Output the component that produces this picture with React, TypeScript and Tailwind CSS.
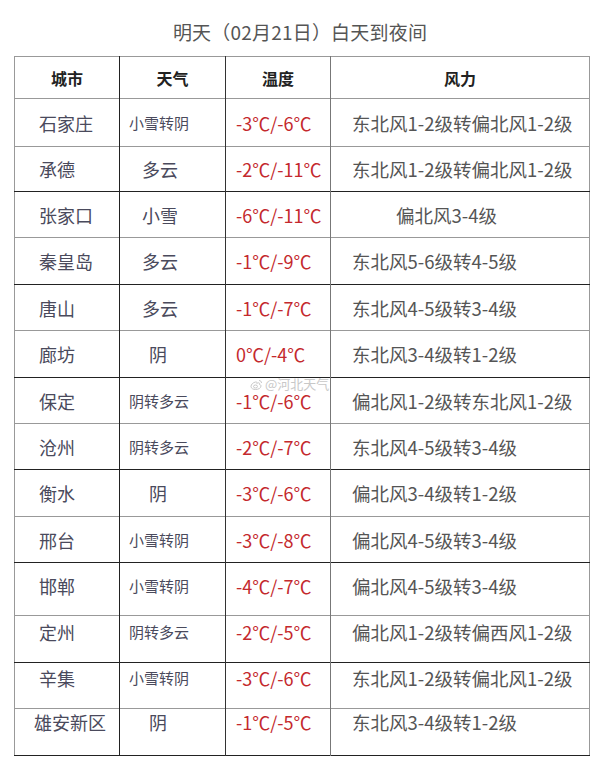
import React from 'react';

type Row = {
  city: string;
  weather: string;
  temp: string;
  wind: string;
  h: number;
  dark: boolean; // bottom line dark
  top?: number; // text top padding when not centered
  cityPad?: string;
  windPad?: string;
};

const rows: Row[] = [
  { city: '石家庄', weather: '小雪转阴', temp: '-3℃/-6℃', wind: '东北风1-2级转偏北风1-2级', h: 48, dark: false },
  { city: '承德', weather: '多云', temp: '-2℃/-11℃', wind: '东北风1-2级转偏北风1-2级', h: 45, dark: true },
  { city: '张家口', weather: '小雪', temp: '-6℃/-11℃', wind: '偏北风3-4级', h: 46, dark: false, windPad: 'pl-[65px]' },
  { city: '秦皇岛', weather: '多云', temp: '-1℃/-9℃', wind: '东北风5-6级转4-5级', h: 47, dark: true },
  { city: '唐山', weather: '多云', temp: '-1℃/-7℃', wind: '东北风4-5级转3-4级', h: 46, dark: false },
  { city: '廊坊', weather: '阴', temp: '0℃/-4℃', wind: '东北风3-4级转1-2级', h: 47, dark: true },
  { city: '保定', weather: '阴转多云', temp: '-1℃/-6℃', wind: '偏北风1-2级转东北风1-2级', h: 46, dark: false },
  { city: '沧州', weather: '阴转多云', temp: '-2℃/-7℃', wind: '东北风4-5级转3-4级', h: 46, dark: true },
  { city: '衡水', weather: '阴', temp: '-3℃/-6℃', wind: '偏北风3-4级转1-2级', h: 47, dark: false },
  { city: '邢台', weather: '小雪转阴', temp: '-3℃/-8℃', wind: '偏北风4-5级转3-4级', h: 46, dark: true },
  { city: '邯郸', weather: '小雪转阴', temp: '-4℃/-7℃', wind: '偏北风4-5级转3-4级', h: 53, dark: false, top: 10 },
  { city: '定州', weather: '阴转多云', temp: '-2℃/-5℃', wind: '偏北风1-2级转偏西风1-2级', h: 47, dark: true, top: 3 },
  { city: '辛集', weather: '小雪转阴', temp: '-3℃/-6℃', wind: '东北风1-2级转偏北风1-2级', h: 46, dark: false, top: 2 },
  { city: '雄安新区', weather: '阴', temp: '-1℃/-5℃', wind: '东北风3-4级转1-2级', h: 47, dark: true, top: 0, cityPad: 'pl-[19px]' },
];

const weatherCell = (w: string) => {
  if (w.length === 4) return 'pl-[9px] text-[15px]';
  if (w.length === 1) return 'pl-[29px] text-[18px]';
  return 'pl-[22px] text-[18px]';
};

const App: React.FC = () => {
  return (
    <div className="w-[600px] h-[775px] bg-white relative" style={{ fontFamily: '"Noto Sans CJK SC", "Noto Sans", sans-serif' }}>
      <h1 className="h-[56px] pt-[19px] text-center text-[19px] leading-[26px] text-[#555] tracking-[0.2px]">
        明天（02月21日）白天到夜间
      </h1>

      <table className="ml-[14px] w-[575px] border-collapse table-fixed border-l border-r border-t border-[#999]">
        <colgroup>
          <col className="w-[105px]" />
          <col className="w-[106px]" />
          <col className="w-[105px]" />
          <col className="w-[259px]" />
        </colgroup>
        <thead>
          <tr className="h-[42px] border-b border-[#999]">
            <th className="border-r border-[#222] text-center text-[16px] font-semibold text-[#222]">城市</th>
            <th className="border-r border-[#333] text-center text-[16px] font-semibold text-[#222]">天气</th>
            <th className="border-r border-[#777] text-center text-[16px] font-semibold text-[#222]">温度</th>
            <th className="text-center text-[16px] font-semibold text-[#222]">风力</th>
          </tr>
        </thead>
        <tbody>
          {rows.map(r => {
            const valign = r.top !== undefined ? 'align-top' : 'align-middle';
            const pt = r.top !== undefined ? { paddingTop: r.top } : undefined;
            return (
              <tr
                key={r.city}
                style={{ height: r.h }}
                className={r.dark ? 'border-b border-[#222]' : 'border-b border-[#999]'}
              >
                <td style={pt} className={`${valign} border-r border-[#222] ${r.cityPad ?? 'pl-[24px]'} text-[18px] leading-[26px] text-[#4a4a5c] whitespace-nowrap`}>
                  {r.city}
                </td>
                <td style={pt} className={`${valign} border-r border-[#333] ${weatherCell(r.weather)} leading-[26px] text-[#4a4a5c] whitespace-nowrap`}>
                  {r.weather}
                </td>
                <td style={pt} className={`${valign} border-r border-[#777] pl-[10px] text-[18px] leading-[26px] text-[#c4292d] whitespace-nowrap`}>
                  {r.temp}
                </td>
                <td style={pt} className={`${valign} ${r.windPad ?? 'pl-[21px]'} text-[18.5px] leading-[26px] text-[#555] whitespace-nowrap`}>
                  {r.wind}
                </td>
              </tr>
            );
          })}
        </tbody>
      </table>

      {/* 微博水印 */}
      <div className="absolute left-[250px] top-[377px] flex items-center gap-[2px] text-[#c8c8c8] text-[13px] leading-[14px] pointer-events-none">
        <svg width="13" height="11" viewBox="0 0 26 22" fill="none" stroke="#c8c8c8" strokeWidth="2">
          <path d="M11 6c-5 1-9 5-9 9 0 4 5 6 9 6 6 0 11-3 11-7 0-2-2-3-3-3 1-3-1-4-4-3l-1 1c0-3-1-4-3-3z" />
          <ellipse cx="11" cy="15" rx="4" ry="3" />
          <path d="M18 3c3 0 5 2 5 5" />
        </svg>
        <span>@河北天气</span>
      </div>
    </div>
  );
};

export default App;
